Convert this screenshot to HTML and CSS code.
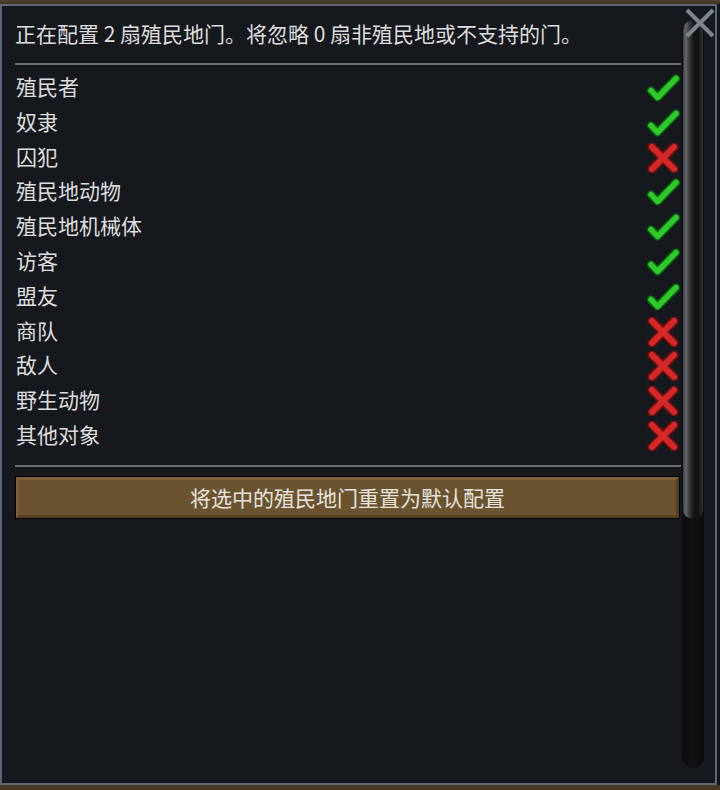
FILE: index.html
```html
<!DOCTYPE html>
<html lang="zh-CN">
<head>
  <meta charset="UTF-8">
  <meta name="viewport" content="width=device-width, initial-scale=1.0">
  <title>殖民地门配置</title>
  <link rel="stylesheet" href="styles.css">
</head>
<body>
  <svg class="sprite" xmlns="http://www.w3.org/2000/svg">
    <symbol id="icon-yes" viewBox="0 0 34 30">
      <path d="M5 17.5 L11.5 24.5 L30 5.5" fill="none" stroke="#0d5a10" stroke-width="8.5" stroke-linecap="round" stroke-linejoin="round"/>
      <path d="M5 17.5 L11.5 24.5 L30 5.5" fill="none" stroke="#2ccb2a" stroke-width="5.5" stroke-linecap="round" stroke-linejoin="round"/>
    </symbol>
    <symbol id="icon-no" viewBox="0 0 34 30">
      <path d="M6 4 L28 26 M28 4 L6 26" fill="none" stroke="#6e1212" stroke-width="9" stroke-linecap="round"/>
      <path d="M6 4 L28 26 M28 4 L6 26" fill="none" stroke="#d72727" stroke-width="6" stroke-linecap="round"/>
    </symbol>
  </svg>

  <div class="dialog">
    <div class="dialog-body">
      <div class="content">
        <p class="summary">正在配置 2 扇殖民地门。将忽略 0 扇非殖民地或不支持的门。</p>
        <hr class="rule">
        <ul class="filters">
          <li class="filter"><span>殖民者</span><svg class="mark"><use href="#icon-yes"/></svg></li>
          <li class="filter"><span>奴隶</span><svg class="mark"><use href="#icon-yes"/></svg></li>
          <li class="filter"><span>囚犯</span><svg class="mark"><use href="#icon-no"/></svg></li>
          <li class="filter"><span>殖民地动物</span><svg class="mark"><use href="#icon-yes"/></svg></li>
          <li class="filter"><span>殖民地机械体</span><svg class="mark"><use href="#icon-yes"/></svg></li>
          <li class="filter"><span>访客</span><svg class="mark"><use href="#icon-yes"/></svg></li>
          <li class="filter"><span>盟友</span><svg class="mark"><use href="#icon-yes"/></svg></li>
          <li class="filter"><span>商队</span><svg class="mark"><use href="#icon-no"/></svg></li>
          <li class="filter"><span>敌人</span><svg class="mark"><use href="#icon-no"/></svg></li>
          <li class="filter"><span>野生动物</span><svg class="mark"><use href="#icon-no"/></svg></li>
          <li class="filter"><span>其他对象</span><svg class="mark"><use href="#icon-no"/></svg></li>
        </ul>
        <hr class="rule rule-bottom">
        <button class="reset"><span class="reset-inner">将选中的殖民地门重置为默认配置</span></button>
      </div>
      <div class="scrollbar">
        <div class="thumb"></div>
      </div>
    </div>
    <button class="close" aria-label="关闭">
      <svg viewBox="0 0 30 30" width="30" height="30">
        <path d="M2 2 L28 28 M28 2 L2 28" stroke="#7e868d" stroke-width="4"/>
      </svg>
    </button>
  </div>
</body>
</html>
```

FILE: styles.css
```css
* {
  margin: 0;
  padding: 0;
  box-sizing: border-box;
}
html, body {
  height: 100%;
}
body {
  font-family: "Noto Sans CJK SC", "Noto Sans", sans-serif;
  background: linear-gradient(to bottom, #4b4430 0, #3e3522 4px, #141518 4px, #141518 785px, #4a3722 785px);
  color: #dedede;
  padding-top: 4px;
}
.sprite {
  position: absolute;
  width: 0;
  height: 0;
  overflow: hidden;
}

/* Dialog window */
.dialog {
  position: relative;
  width: 717px;
  height: 781px;
  border: 2px solid #5d6778;
  background-color: #15181d;
}
.dialog-body {
  display: flex;
  height: 100%;
}
.content {
  flex: 1;
  padding-left: 13px;
}
.summary {
  font-size: 21px;
  line-height: 28px;
  padding-top: 13px;
  white-space: nowrap;
}
.rule {
  border: none;
  height: 2px;
  background-color: #6b6f74;
  margin-top: 16px;
}
.rule-bottom {
  margin-top: 12px;
}

/* Filter rows */
.filters {
  list-style: none;
  margin-top: 5.6px;
}
.filter {
  display: flex;
  justify-content: space-between;
  align-items: center;
  height: 34.8px;
  font-size: 21px;
}
.filter span {
  padding: 0 0 4px 1px;
}
.mark {
  width: 34px;
  height: 30px;
  margin-right: 1px;
}

/* Reset button */
.reset {
  display: block;
  width: 665px;
  height: 43px;
  margin-top: 9px;
  border: 1px solid #000;
  background: none;
  font-family: inherit;
  cursor: pointer;
}
.reset-inner {
  display: flex;
  align-items: center;
  justify-content: center;
  height: 100%;
  padding-bottom: 2px;
  border-style: solid;
  border-width: 3px;
  border-color: #7e6139 #54401f #54401f #7b5e36;
  background-color: #6b5330;
  color: #e6e3de;
  font-size: 21px;
}
.reset:hover .reset-inner {
  background-color: #7a5f38;
}

/* Scrollbar */
.scrollbar {
  width: 22px;
  height: 748px;
  margin: 14px 11px 0 1px;
  border-radius: 11px;
  background: linear-gradient(to right, #0c0d0f 0%, #101215 50%, #0b0c0e 100%);
  padding: 0 1px;
}
.thumb {
  height: 498px;
  border-radius: 10px 10px 8px 8px;
  background: linear-gradient(to right, #3c3e41 0%, #64676b 14%, #3a3c40 30%, #17181a 52%, #0f1012 74%, #303235 100%);
}

/* Close button */
.close {
  position: absolute;
  top: 2px;
  right: 0;
  width: 30px;
  height: 30px;
  border: none;
  background: none;
  cursor: pointer;
}
.close svg {
  display: block;
}
```
